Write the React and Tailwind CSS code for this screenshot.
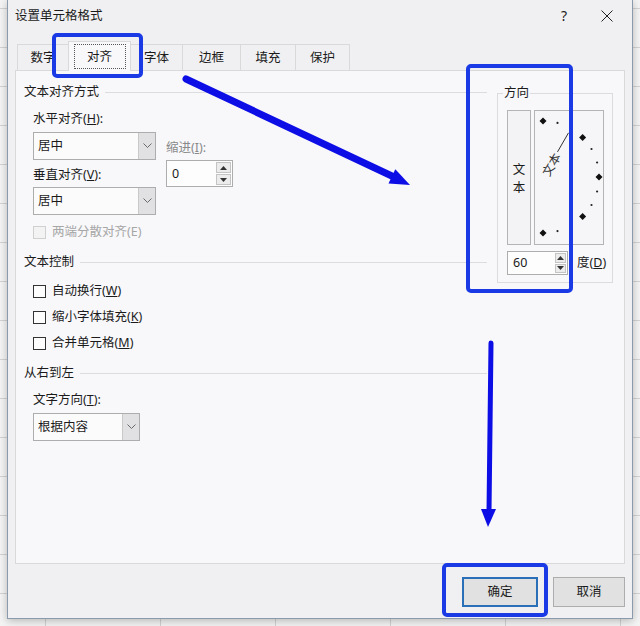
import React from 'react';

// 设置单元格格式 dialog, 对齐 tab, with blue annotations on top

function Key({ k }) {
  return (
    <>
      (<span className="underline">{k}</span>)
    </>
  );
}

function Section({ title }) {
  return (
    <div className="flex h-[18px] items-center">
      <span>{title}</span>
      <div className="ml-[6px] h-px flex-1 bg-[#dcdcdf]" />
    </div>
  );
}

function Chevron() {
  return (
    <svg width="9" height="6" viewBox="0 0 9 6">
      <polyline points="0.5,0.5 4.5,4.5 8.5,0.5" fill="none" stroke="#6a6a6a" strokeWidth="1" />
    </svg>
  );
}

function Select({ value, className }) {
  return (
    <div className={"flex h-[28px] border border-[#adadad] bg-[#fbfbfb] " + className}>
      <div className="flex flex-1 items-center pl-[4px]">{value}</div>
      <div className="flex w-[17px] items-center justify-center border-l border-[#c9c9c9] bg-[#e1e1e3]">
        <Chevron />
      </div>
    </div>
  );
}

function Tri({ up }) {
  return (
    <svg width="7" height="4" viewBox="0 0 7 4">
      <polygon points={up ? '0,4 7,4 3.5,0' : '0,0 7,0 3.5,4'} fill="#333" />
    </svg>
  );
}

function Spin({ value, className, btn }) {
  return (
    <div className={"flex border border-[#adadad] bg-[#fdfdfd] " + className}>
      <div className="flex flex-1 items-center pl-[5px]">{value}</div>
      <div className={"flex flex-col gap-px p-px " + btn}>
        <div className="flex flex-1 items-center justify-center border border-[#c4c4c4] bg-[#ececec]">
          <Tri up />
        </div>
        <div className="flex flex-1 items-center justify-center border border-[#c4c4c4] bg-[#ececec]">
          <Tri />
        </div>
      </div>
    </div>
  );
}

function Check({ children, disabled }) {
  return (
    <div className="flex h-[18px] items-center pl-[9px]">
      <span
        className={
          disabled
            ? 'h-[13px] w-[13px] border border-[#d0d0d0] bg-[#f3f3f3]'
            : 'h-[13px] w-[13px] border border-[#333333] bg-[#fdfdfd]'
        }
      />
      <span className={disabled ? 'ml-[6px] text-[#a6a6a6]' : 'ml-[6px]'}>{children}</span>
    </div>
  );
}

function Dial() {
  const cx = 8;
  const cy = 66;
  const R = 56;
  const pt = (deg, r) => [cx + r * Math.cos((deg * Math.PI) / 180), cy - r * Math.sin((deg * Math.PI) / 180)];
  const big = [90, 45, 0, -45, -90];
  const small = [75, 60, 30, 15, -15, -30, -60, -75];
  const [x1, y1] = pt(60, 29);
  const [x2, y2] = pt(60, 51);
  const [tx, ty] = pt(60, 15);
  return (
    <svg width="68" height="133" viewBox="0 0 68 133">
      {big.map((d) => {
        const [x, y] = pt(d, R);
        return <polygon key={d} points={`${x},${y - 3.5} ${x + 3.5},${y} ${x},${y + 3.5} ${x - 3.5},${y}`} fill="#111" />;
      })}
      {small.map((d) => {
        const [x, y] = pt(d, R);
        return <circle key={d} cx={x} cy={y} r="1.1" fill="#222" />;
      })}
      <line x1={x1} y1={y1} x2={x2} y2={y2} stroke="#333" strokeWidth="1" />
      <text
        x={tx}
        y={ty}
        fontSize="12"
        textAnchor="middle"
        dominantBaseline="central"
        fill="#333"
        transform={`rotate(-60 ${tx} ${ty})`}
        style={{ fontFamily: "'Noto Sans CJK SC', sans-serif" }}
      >
        文本
      </text>
    </svg>
  );
}

const tabs = [
  { name: '数字', w: 'w-[52px]' },
  { name: '对齐', w: 'w-[63px]', active: true },
  { name: '字体', w: 'w-[53px]' },
  { name: '边框', w: 'w-[59px]' },
  { name: '填充', w: 'w-[56px]' },
  { name: '保护', w: 'w-[55px]' },
];

export default function App() {
  return (
    <div className="relative h-[626px] w-[640px] overflow-hidden bg-[#f4f4f4] bg-[linear-gradient(90deg,#d2d2d2_1px,transparent_1px),linear-gradient(#d2d2d2_1px,transparent_1px)] bg-size-[115px_39px] bg-position-[45px_8px] pl-[7px] font-['Noto_Sans','Noto_Sans_CJK_SC',sans-serif] text-[12.5px] leading-[18px] text-[#1b1b1b]">
      {/* dialog */}
      <div className="flex h-[619px] w-[626px] flex-col border-x border-b border-[#8c9bab] bg-[#f0f0f2] shadow-[0_2px_8px_rgba(0,0,0,0.25)]">
        {/* title bar */}
        <div className="flex h-[32px] items-center pl-[7px] pr-[19px]">
          <span className="flex-1">设置单元格格式</span>
          <span className="text-[14px]">?</span>
          <svg className="ml-[34px]" width="12" height="12" viewBox="0 0 12 12">
            <path d="M0.5 0.5 L11.5 11.5 M11.5 0.5 L0.5 11.5" stroke="#222" strokeWidth="1" />
          </svg>
        </div>

        {/* tabs */}
        <div className="flex items-end pl-[9px] pt-[9px]">
          {tabs.map((t, i) =>
            t.active ? (
              <div
                key={t.name}
                className={'relative z-10 -mb-px flex h-[30px] justify-center border-x border-t border-[#d9d9d9] bg-[#f8f8fa] pt-[2px] ' + t.w + (i ? ' -ml-px' : '')}
              >
                <div className="flex h-[25px] w-[52px] items-center justify-center border border-dotted border-[#555]">{t.name}</div>
              </div>
            ) : (
              <div
                key={t.name}
                className={'flex h-[26px] items-center justify-center border-x border-t border-[#d9d9d9] bg-[#f0f0f2] ' + t.w + (i ? ' -ml-px' : '')}
              >
                {t.name}
              </div>
            )
          )}
        </div>

        {/* tab panel */}
        <div className="mx-[7px] flex h-[494px] items-start border border-[#d9d9d9] bg-[#f8f8fa] pl-[8px] pt-[12px]">
          {/* left column */}
          <div className="flex w-[463px] flex-col">
            <Section title="文本对齐方式" />
            <div className="mt-[9px] flex pl-[9px]">
              <div className="flex w-[123px] flex-col">
                <div className="h-[18px]">
                  水平对齐<Key k="H" />:
                </div>
                <Select value="居中" className="mt-[4px] w-[123px]" />
                <div className="mt-[6px] h-[18px]">
                  垂直对齐<Key k="V" />:
                </div>
                <Select value="居中" className="mt-[3px] w-[123px]" />
              </div>
              <div className="ml-[10px] flex flex-col pt-[29px]">
                <div className="h-[18px] text-[#8a8a8a]">
                  缩进(<span className="underline">I</span>):
                </div>
                <Spin value="0" className="mt-[3px] h-[27px] w-[67px]" btn="w-[17px]" />
              </div>
            </div>
            <div className="mt-[8px]">
              <Check disabled>两端分散对齐(E)</Check>
            </div>

            <div className="mt-[12px]">
              <Section title="文本控制" />
            </div>
            <div className="mt-[11px] flex flex-col gap-[8px]">
              <Check>
                自动换行<Key k="W" />
              </Check>
              <Check>
                缩小字体填充<Key k="K" />
              </Check>
              <Check>
                合并单元格<Key k="M" />
              </Check>
            </div>

            <div className="mt-[12px]">
              <Section title="从右到左" />
            </div>
            <div className="mt-[9px] h-[18px] pl-[9px]">
              文字方向<Key k="T" />:
            </div>
            <Select value="根据内容" className="ml-[9px] mt-[4px] w-[107px]" />
          </div>

          {/* orientation group */}
          <fieldset className="ml-[10px] mt-[1px] w-[116px] border border-[#dcdcdf]">
            <legend className="ml-[5px] px-px leading-[18px]">方向</legend>
            <div className="flex flex-col pb-[7px] pl-[9px] pt-[8px]">
              <div className="flex">
                <div className="flex h-[135px] w-[24px] flex-col items-center justify-center border border-[#b4b4b4] bg-[#f3f3f5] pt-[3px]">
                  <span>文</span>
                  <span>本</span>
                </div>
                <div className="ml-[3px] h-[135px] w-[70px] border border-[#b4b4b4] bg-[#f6f6f8]">
                  <Dial />
                </div>
              </div>
              <div className="mt-[6px] flex items-center">
                <Spin value="60" className="h-[24px] w-[61px]" btn="w-[13px]" />
                <span className="ml-[9px]">
                  度<Key k="D" />
                </span>
              </div>
            </div>
          </fieldset>
        </div>

        {/* buttons */}
        <div className="flex justify-end gap-[15px] pr-[7px] pt-[13px]">
          <button className="flex h-[30px] w-[76px] items-center justify-center border-2 border-[#2a6fb8] bg-[#e1e1e1]">确定</button>
          <button className="flex h-[30px] w-[72px] items-center justify-center border border-[#adadad] bg-[#e1e1e1]">取消</button>
        </div>
      </div>

      {/* blue annotations */}
      <svg className="pointer-events-none absolute left-0 top-0" width="640" height="626" viewBox="0 0 640 626">
        <rect x="54" y="35" width="87" height="41" rx="3" fill="none" stroke="#1a3ae6" strokeWidth="4" />
        <rect x="468" y="66" width="103" height="225" rx="3" fill="none" stroke="#1a3ae6" strokeWidth="4" />
        <rect x="444" y="565" width="102" height="50" rx="3" fill="none" stroke="#1a3ae6" strokeWidth="4" />

        <line x1="186" y1="79" x2="394" y2="177" stroke="#0d0de6" strokeWidth="7" strokeLinecap="round" />
        <polygon points="410,185 388.5,183.6 395.3,169.2" fill="#0d0de6" />

        <line x1="491" y1="343" x2="489" y2="512" stroke="#0d0de6" strokeWidth="5" strokeLinecap="round" />
        <polygon points="488,527 481,509 496,509" fill="#0d0de6" />
      </svg>
    </div>
  );
}
